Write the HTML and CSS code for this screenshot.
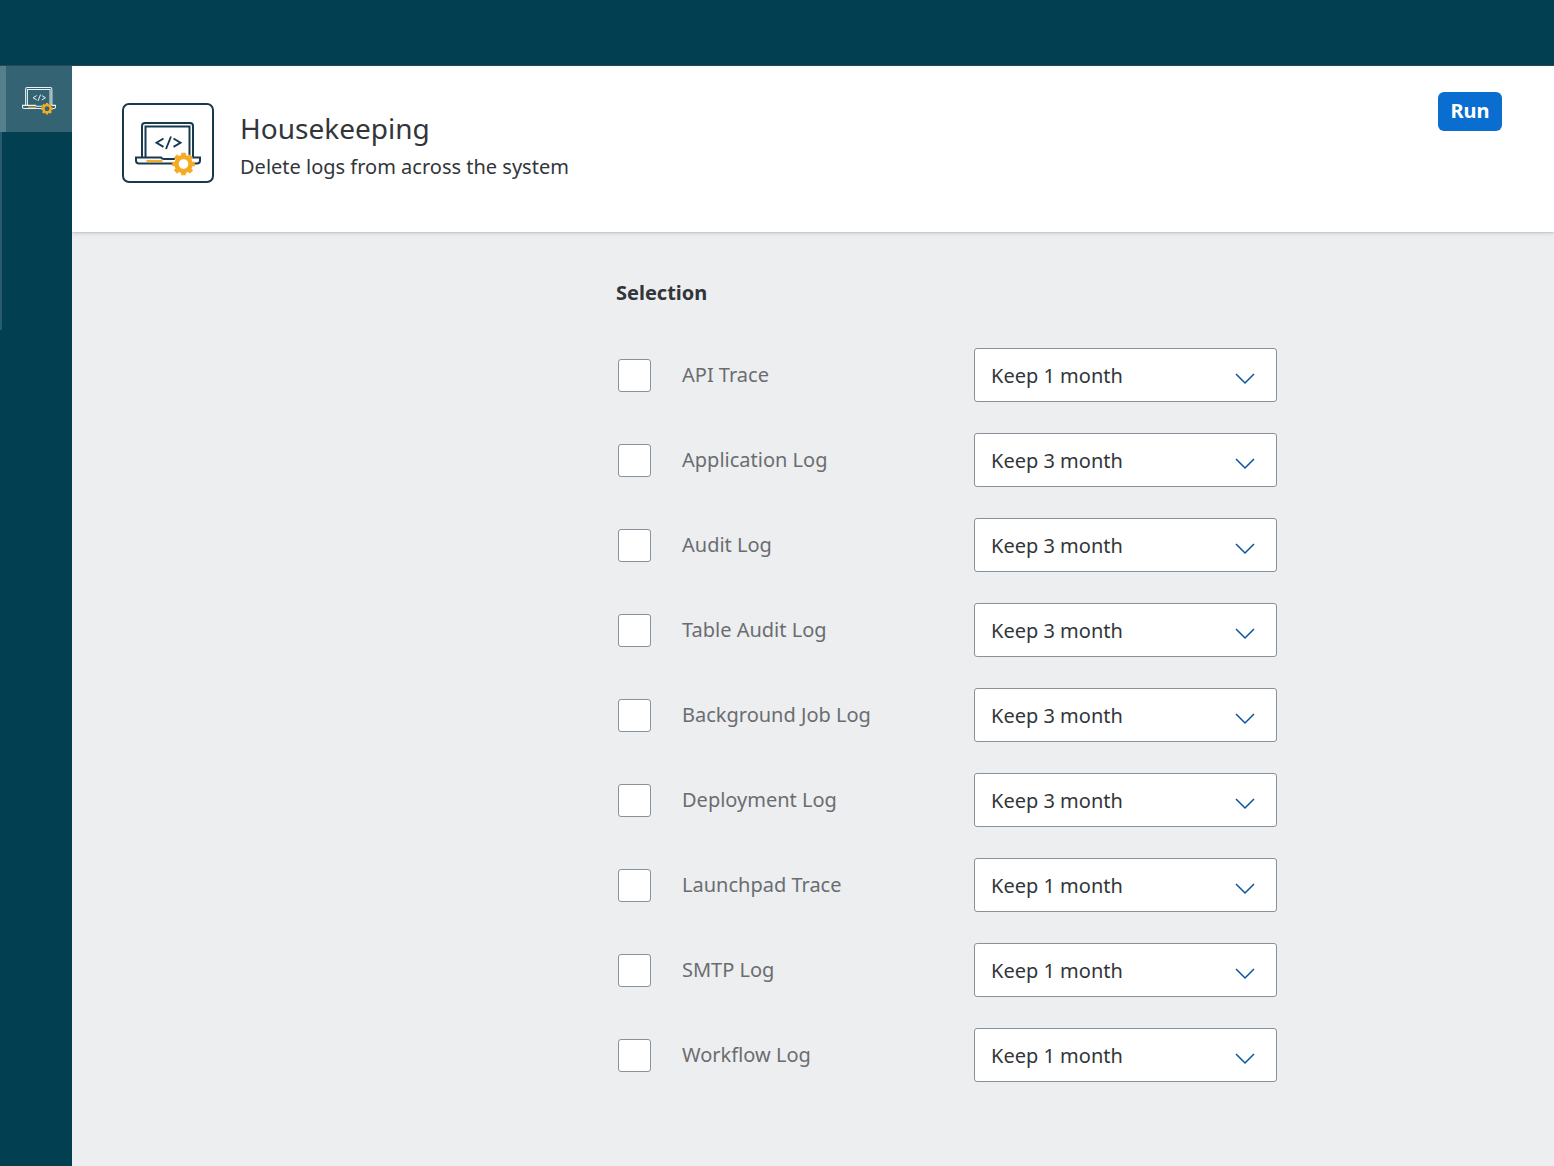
FILE: index.html
```html
<!DOCTYPE html>
<html lang="en">
<head>
<meta charset="utf-8">
<title>Housekeeping</title>
<link rel="stylesheet" href="styles.css">
</head>
<body>
<svg class="defs" width="0" height="0" aria-hidden="true">
  <symbol id="laptop" viewBox="0 0 66 54">
    <path d="M7 35V4q0-3 3-3h45q3 0 3 3v31M10.500 35V4.500h44V35" fill="none" stroke="currentColor" stroke-width="2"/>
    <path d="M1 35.500h25q1 1.500 3 1.500h11q2 0 3-1.500h22v3q0 3-3 3H4q-3 0-3-3z" fill="none" stroke="currentColor" stroke-width="2"/>
    <path d="M11.500 39h16" stroke="#f5ab22" stroke-width="2.200"/>
    <path d="M28.500 16.500l-7 4.200 7 4.200M36 14.500l-5 12.500M38.500 16.500l7 4.200-7 4.200" fill="none" stroke="currentColor" stroke-width="1.900"/>
    <circle cx="48.500" cy="42" r="10" class="gear-gap"/>
    <g fill="none" stroke="#f5ab22">
      <circle cx="48.500" cy="42" r="7" stroke-width="4.400"/>
      <path d="M48.500 30.700v4M48.500 49.300v4M37.200 42h4M55.800 42h4M40.500 34l2.800 2.800M53.700 47.200l2.800 2.800M40.500 50l2.800-2.800M53.700 36.800l2.800-2.800" stroke-width="4.600"/>
    </g>
  </symbol>
</svg>
<header class="shell"></header>
<div class="layout">
  <nav class="sidebar" aria-label="Applications">
    <a class="nav-item" href="#" aria-label="Housekeeping"><svg class="nav-icon"><use href="#laptop"/></svg></a>
    <div class="nav-track"></div>
  </nav>
  <main class="page">
    <header class="page-header">
      <div class="app-icon"><svg class="app-art"><use href="#laptop"/></svg></div>
      <div class="heading">
        <h1>Housekeeping</h1>
        <p>Delete logs from across the system</p>
      </div>
      <button class="run" type="button">Run</button>
    </header>
    <form class="form">
      <h2>Selection</h2>
      <div class="row"><input type="checkbox" id="c1"><label for="c1">API Trace</label><select aria-label="API Trace retention"><option>Keep 1 month</option></select></div>
      <div class="row"><input type="checkbox" id="c2"><label for="c2">Application Log</label><select aria-label="Application Log retention"><option>Keep 3 month</option></select></div>
      <div class="row"><input type="checkbox" id="c3"><label for="c3">Audit Log</label><select aria-label="Audit Log retention"><option>Keep 3 month</option></select></div>
      <div class="row"><input type="checkbox" id="c4"><label for="c4">Table Audit Log</label><select aria-label="Table Audit Log retention"><option>Keep 3 month</option></select></div>
      <div class="row"><input type="checkbox" id="c5"><label for="c5">Background Job Log</label><select aria-label="Background Job Log retention"><option>Keep 3 month</option></select></div>
      <div class="row"><input type="checkbox" id="c6"><label for="c6">Deployment Log</label><select aria-label="Deployment Log retention"><option>Keep 3 month</option></select></div>
      <div class="row"><input type="checkbox" id="c7"><label for="c7">Launchpad Trace</label><select aria-label="Launchpad Trace retention"><option>Keep 1 month</option></select></div>
      <div class="row"><input type="checkbox" id="c8"><label for="c8">SMTP Log</label><select aria-label="SMTP Log retention"><option>Keep 1 month</option></select></div>
      <div class="row"><input type="checkbox" id="c9"><label for="c9">Workflow Log</label><select aria-label="Workflow Log retention"><option>Keep 1 month</option></select></div>
    </form>
  </main>
</div>
</body>
</html>
```
FILE: styles.css
```css
* { box-sizing: border-box; }
body {
  margin: 0;
  min-height: 100vh;
  display: flex;
  flex-direction: column;
  font-family: "Noto Sans", "Open Sans", sans-serif;
  font-size: 20px;
  line-height: 28px;
  color: #32363a;
  background: #edeef0;
}
.defs { position: absolute; }
.shell {
  z-index: 1;
  height: 66px;
  background: #024051;
  border-bottom: 1px solid #2b4657;
}
.layout { flex: 1; display: flex; }
.sidebar { z-index: 1; width: 72px; flex-shrink: 0; background: #024051; }
.nav-item {
  display: flex;
  align-items: center;
  height: 66px;
  padding: 4px 0 0 16px;
  border-left: 6px solid #557f8d;
  background: #346473;
  color: #e9f3f6;
  --gap: #346473;
}
.nav-icon { width: 34px; height: 28px; }
.nav-track { width: 2px; height: 198px; background: #285c6c; }
.gear-gap { fill: var(--gap); }
.page { flex: 1; min-width: 0; }
.page-header {
  display: flex;
  align-items: flex-start;
  gap: 26px;
  height: 166px;
  padding: 26px 52px 0 50px;
  background: #fff;
  box-shadow: 0 0 2px #a8abac, 0 2px 4px #d5d7d8;
}
.app-icon {
  display: flex;
  justify-content: center;
  width: 92px;
  height: 80px;
  margin-top: 11px;
  padding-top: 17px;
  border: 2px solid #173a50;
  border-radius: 7px;
  color: #173a50;
  --gap: #fff;
}
.app-art { width: 66px; height: 54px; }
.heading { flex: 1; padding-top: 16px; }
h1, h2, p { margin: 0; }
h1 { font-size: 28px; line-height: 40px; font-weight: 400; }
p { margin-top: 5px; }
.run {
  height: 39px;
  width: 64px;
  padding: 0 0 2px;
  border: 0;
  border-radius: 6px;
  background: #0a6ed1;
  color: #fff;
  font: 700 20px "Noto Sans", "Open Sans", sans-serif;
}
.form {
  display: flex;
  flex-direction: column;
  gap: 31px;
  width: 661px;
  margin-left: calc(50vw - 233px);
  padding: 47px 0 84px;
}
h2 { font-size: 20px; line-height: 28px; font-weight: 700; margin-bottom: 10px; }
.row { display: grid; grid-template-columns: 35px 1fr 303px; align-items: center; }
input {
  appearance: none;
  width: 33px;
  height: 33px;
  margin: 0 0 0 2px;
  border: 1px solid #89919a;
  border-radius: 3px;
  background: #fff;
}
input:checked { background: #0a6ed1; }
label { padding-left: 31px; color: #6a6d70; }
select {
  appearance: none;
  width: 100%;
  height: 54px;
  padding: 0 60px 0 16px;
  border: 1px solid #89919a;
  border-radius: 3px;
  background: #fff url("data:image/svg+xml,%3Csvg xmlns='http://www.w3.org/2000/svg' width='20' height='12'%3E%3Cpath d='M1 1l9 9 9-9' fill='none' stroke='%230854a0' stroke-width='1.5'/%3E%3C/svg%3E") no-repeat right 21px top 24px;
  font: 20px "Noto Sans", "Open Sans", sans-serif;
  color: #32363a;
}
```
